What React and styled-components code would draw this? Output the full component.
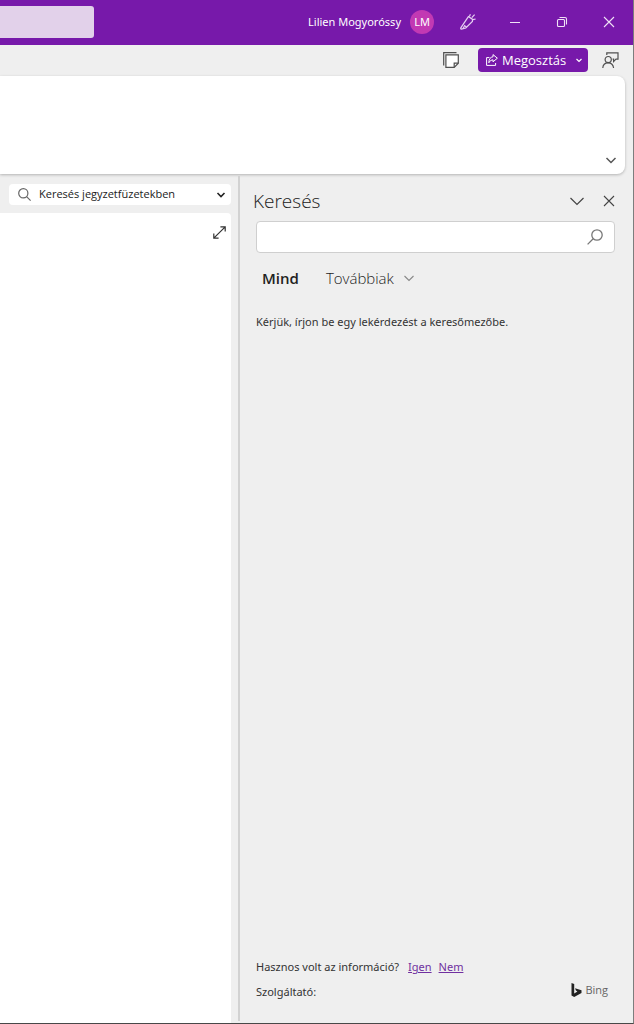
import styled, { createGlobalStyle } from 'styled-components';

const GlobalStyle = createGlobalStyle`
	*, *::before, *::after {
		box-sizing: border-box;
	}
	body {
		margin: 0;
		background: #efefef;
		color: #333;
		font-family: 'Noto Sans', 'Open Sans', sans-serif;
		font-size: 11px;
		line-height: 16px;
	}
	button, input {
		font: inherit;
		color: inherit;
	}
`;

function App() {
	return (
		<>
			<GlobalStyle />
			<Window>
				<TitleBar />
				<CommandBar />
				<Ribbon>
					<IconButton aria-label='Menüszalag' $width={28} $height={28}>
						<Chevron width={10} stroke='#555' weight={1.5} />
					</IconButton>
				</Ribbon>
				<Body>
					<Notebook />
					<SearchPane />
				</Body>
			</Window>
		</>
	);
}

export default App;

const Window = styled.div`
	display: flex;
	flex-direction: column;
	min-height: 100vh;
	border-right: 1px solid #7d7d7d;
	border-bottom: 1px solid #484848;
`;

const IconButton = styled.button`
	display: flex;
	align-items: center;
	justify-content: center;
	flex: none;
	width: ${props => props.$width}px;
	height: ${props => props.$height}px;
	padding: 0;
	border: 0;
	background: none;
`;

const Svg = styled.svg`
	display: block;
	flex: none;
	fill: none;
	overflow: visible;
`;

const Chevron = ({ width, stroke, weight }) => (
	<Svg
		width={width}
		height={width / 2}
		viewBox={`0 0 ${width} ${width / 2}`}
		stroke={stroke}
		strokeWidth={weight}
	>
		<path d={`M0.5 0 L${width / 2} ${width / 2 - 0.5} L${width - 0.5} 0`} />
	</Svg>
);

const Cross = ({ stroke }) => (
	<Svg width='10' height='10' viewBox='0 0 10 10' stroke={stroke} strokeWidth='1.1'>
		<path d='M0 0 L10 10 M10 0 L0 10' />
	</Svg>
);

/* title bar */

const TitleBar = () => {
	return (
		<TitleWrapper>
			<TitleSearch aria-label='Keresés' />
			<Account>
				<span>Lilien Mogyoróssy</span>
				<Avatar>LM</Avatar>
			</Account>
			<IconButton aria-label='Újdonságok' $width={47} $height={44}>
				<Svg width='16' height='16' viewBox='0 0 16 16' stroke='#e6cff2' strokeWidth='1.2'>
					<path d='M8.4 2.6 L12.6 5.4 L12.4 7.4 L5.8 14 L1.4 15.2 Q0.4 15 0.8 13.8 Z' />
					<path d='M3 14.8 L4.6 11.6 L6.6 13.2 M9.4 2.4 L10.4 0.2 M11.8 3.6 L14.6 0.6 M13 5.6 L15.6 5' />
				</Svg>
			</IconButton>
			<IconButton aria-label='Kis méret' $width={47} $height={44}>
				<Svg width='10' height='1' viewBox='0 0 10 1' stroke='#f0e2f6'>
					<path d='M0 0.5 H10' />
				</Svg>
			</IconButton>
			<IconButton aria-label='Előző méret' $width={47} $height={44}>
				<Svg width='10' height='10' viewBox='0 0 10 10' stroke='#f0e2f6' strokeWidth='1.1'>
					<rect x='0.5' y='2.5' width='7' height='7' rx='1' />
					<path d='M2.5 0.5 H8 Q9.5 0.5 9.5 2 V7.5' />
				</Svg>
			</IconButton>
			<IconButton aria-label='Bezárás' $width={47} $height={44}>
				<Cross stroke='#f0e2f6' />
			</IconButton>
		</TitleWrapper>
	);
};

const TitleWrapper = styled.header`
	display: flex;
	height: 45px;
	padding-right: 1px;
	background: #7719aa;
`;

const TitleSearch = styled.input`
	width: 94px;
	height: 32px;
	margin-top: 6px;
	padding: 0 8px;
	border: 0;
	border-radius: 0 3px 3px 0;
	background: #e2d1ea;
`;

const Account = styled.div`
	display: flex;
	align-items: center;
	gap: 9px;
	height: 44px;
	margin-left: auto;
	margin-right: 10px;
	color: #fff;
`;

const Avatar = styled.span`
	width: 24px;
	border-radius: 50%;
	background: #c239b3;
	line-height: 24px;
	text-align: center;
`;

/* row with the share button */

const CommandBar = () => {
	return (
		<CommandWrapper>
			<IconButton aria-label='Jegyzetek' $width={24} $height={24}>
				<Svg width='16' height='16' viewBox='0 0 16 16' stroke='#505050' strokeWidth='1.2'>
					<path d='M0.7 13.5 V0.7 H13.5' />
					<path d='M2.9 2.9 H15.3 V11.2 L11.2 15.3 H2.9 Z' fill='#fff' />
					<path d='M15.3 11.2 H11.2 V15.3' />
				</Svg>
			</IconButton>
			<ShareButton>
				<Svg width='12' height='12' viewBox='0 0 12 12' stroke='#fff' strokeWidth='1'>
					<path d='M3.4 3.6 H0.6 V11.4 H9.6 V9' />
					<path d='M7 0.6 L11.4 4.2 L7 7.8 V5.8 Q4.4 5.6 2.8 8.8 Q3 3.2 7 2.8 Z' />
				</Svg>
				<ShareLabel>Megosztás</ShareLabel>
				<Chevron width={6} stroke='#fff' weight={1.2} />
			</ShareButton>
			<IconButton aria-label='Visszajelzés' $width={24} $height={24}>
				<Svg width='17' height='17' viewBox='0 0 17 17' stroke='#505050' strokeWidth='1.2'>
					<circle cx='6.2' cy='7.6' r='3.1' />
					<path d='M0.8 16 Q1 10.8 6.2 10.8 Q11 10.8 11.6 16' />
					<path d='M4.8 3 V0.8 H16 V7.2 H14 L11.6 9.6 V7.2 H10.6' />
				</Svg>
			</IconButton>
		</CommandWrapper>
	);
};

const CommandWrapper = styled.div`
	display: flex;
	align-items: center;
	justify-content: flex-end;
	gap: 10px;
	height: 31px;
	padding: 0 11px 1px 0;

	> :first-child {
		margin-right: 5px;
	}
`;

const ShareButton = styled.button`
	display: flex;
	align-items: center;
	width: 110px;
	height: 24px;
	padding: 0 6px 0 8px;
	border: 0;
	border-radius: 4px;
	background: #7719aa;
	color: #fff;
	font-family: 'Open Sans', sans-serif;
	font-size: 13px;
`;

const ShareLabel = styled.span`
	flex: 1;
	padding-left: 4px;
	text-align: left;
`;

const Ribbon = styled.section`
	display: flex;
	align-items: flex-end;
	justify-content: flex-end;
	height: 98px;
	margin-right: 8px;
	border-radius: 0 8px 8px 0;
	background: #fff;
	box-shadow: 0 1px 3px rgba(0, 0, 0, 0.25);
`;

const Body = styled.div`
	display: flex;
	flex: 1;
`;

/* notebook side */

const Notebook = () => {
	return (
		<NotebookWrapper>
			<NotebookSearch>
				<Svg width='13' height='13' viewBox='0 0 13 13' stroke='#666' strokeWidth='1.2'>
					<circle cx='5.3' cy='5.3' r='4.6' />
					<path d='M8.6 8.6 L12.6 12.6' />
				</Svg>
				<NotebookInput
					aria-label='Keresés jegyzetfüzetekben'
					placeholder='Keresés jegyzetfüzetekben'
				/>
				<IconButton aria-label='Keresés helye' $width={20} $height={20}>
					<Chevron width={8} stroke='#222' weight={1.6} />
				</IconButton>
			</NotebookSearch>
			<Page>
				<IconButton aria-label='Teljes oldal' $width={24} $height={24}>
					<Svg width='13' height='13' viewBox='0 0 13 13' stroke='#333' strokeWidth='1.2'>
						<path d='M0.8 12.2 L12.2 0.8 M7.4 0.8 H12.2 V5.6 M0.8 7.4 V12.2 H5.6' />
					</Svg>
				</IconButton>
			</Page>
		</NotebookWrapper>
	);
};

const NotebookWrapper = styled.main`
	display: flex;
	flex-direction: column;
	gap: 8px;
	flex: 1;
	min-width: 0;
	padding: 10px 7px 0 0;
`;

const NotebookSearch = styled.div`
	display: flex;
	align-items: center;
	height: 21px;
	margin-left: 9px;
	padding-left: 9px;
	border-radius: 4px;
	background: #fff;
`;

const NotebookInput = styled.input`
	flex: 1;
	min-width: 0;
	height: 20px;
	padding: 0 0 2px 8px;
	border: 0;
	background: none;
	font-family: 'Open Sans', sans-serif;

	&::placeholder {
		color: #222;
		opacity: 1;
	}
`;

const Page = styled.div`
	display: flex;
	justify-content: flex-end;
	align-items: flex-start;
	flex: 1;
	padding-top: 7px;
	border-radius: 0 4px 0 0;
	background: #fff;
`;

/* search pane */

const SearchPane = () => {
	return (
		<Pane>
			<PaneHeader>
				<PaneTitle>Keresés</PaneTitle>
				<IconButton aria-label='Beállítások' $width={32} $height={26}>
					<Chevron width={14} stroke='#444' weight={1.2} />
				</IconButton>
				<IconButton aria-label='Ablak bezárása' $width={32} $height={26}>
					<Cross stroke='#444' />
				</IconButton>
			</PaneHeader>
			<SearchBox>
				<SearchInput aria-label='Keresés' />
				<IconButton aria-label='Keresés indítása' $width={38} $height={30}>
					<Svg width='16' height='16' viewBox='0 0 16 16' stroke='#777' strokeWidth='1.3'>
						<circle cx='10' cy='6' r='5.2' />
						<path d='M6.2 9.8 L0.6 15.4' />
					</Svg>
				</IconButton>
			</SearchBox>
			<Tabs>
				<Tab $active>Mind</Tab>
				<Tab>
					Továbbiak
					<Chevron width={10} stroke='#888' weight={1.1} />
				</Tab>
			</Tabs>
			<Message>Kérjük, írjon be egy lekérdezést a keresőmezőbe.</Message>
			<Footer>
				<Feedback>
					<span>Hasznos volt az információ?</span>
					<Links>
						<Link href='#igen'>Igen</Link>
						<Link href='#nem'>Nem</Link>
					</Links>
				</Feedback>
				<Provider>
					<span>Szolgáltató:</span>
					<Bing>
						<Svg width='11' height='14' viewBox='0 0 11 14'>
							<path
								d='M0.5 0 L3.2 1 V10.4 L6.4 8.4 L4.9 7.6 L4 5.2 L10.5 7.3 V10 L3.2 14 L0.5 12.4 Z'
								fill='#222'
							/>
						</Svg>
						Bing
					</Bing>
				</Provider>
			</Footer>
		</Pane>
	);
};

const Pane = styled.aside`
	display: flex;
	flex-direction: column;
	flex: none;
	width: 395px;
	margin: 2px 0;
	padding: 12px 18px 21px 16px;
	border-left: 2px solid #d2d2d2;
`;

const PaneHeader = styled.div`
	display: flex;
	align-items: center;
	height: 26px;
	margin: 0 -10px 7px -3px;
`;

const PaneTitle = styled.h2`
	flex: 1;
	margin: 0;
	color: #222;
	font-family: 'Open Sans', sans-serif;
	font-size: 19px;
	font-weight: 300;
	line-height: 24px;
`;

const SearchBox = styled.div`
	display: flex;
	height: 32px;
	border: 1px solid #cfcfcf;
	border-radius: 4px;
	background: #fff;
`;

const SearchInput = styled.input`
	flex: 1;
	min-width: 0;
	padding: 0 8px;
	border: 0;
	background: none;
	font-size: 14px;
`;

const Tabs = styled.div`
	display: flex;
	gap: 27px;
	margin-top: 13px;
	padding-left: 6px;
`;

const Tab = styled.button`
	display: flex;
	align-items: center;
	gap: 10px;
	padding: 0;
	border: 0;
	background: none;
	color: #222;
	font-family: 'Open Sans', sans-serif;
	font-size: 15px;
	font-weight: ${props => (props.$active ? 600 : 300)};
	line-height: 24px;
`;

const Message = styled.p`
	margin: 24px 0 0;
`;

const Footer = styled.footer`
	display: flex;
	flex-direction: column;
	gap: 9px;
	margin-top: auto;
`;

const Feedback = styled.div`
	display: flex;
	gap: 9px;
`;

const Links = styled.span`
	display: flex;
	gap: 7px;
`;

const Link = styled.a`
	color: #7030a0;
`;

const Provider = styled.div`
	display: flex;
	justify-content: space-between;
	padding-right: 7px;
`;

const Bing = styled.span`
	display: flex;
	align-items: center;
	gap: 3px;
	margin-top: -4px;
	color: #666;
	font-family: 'Open Sans', sans-serif;
`;
